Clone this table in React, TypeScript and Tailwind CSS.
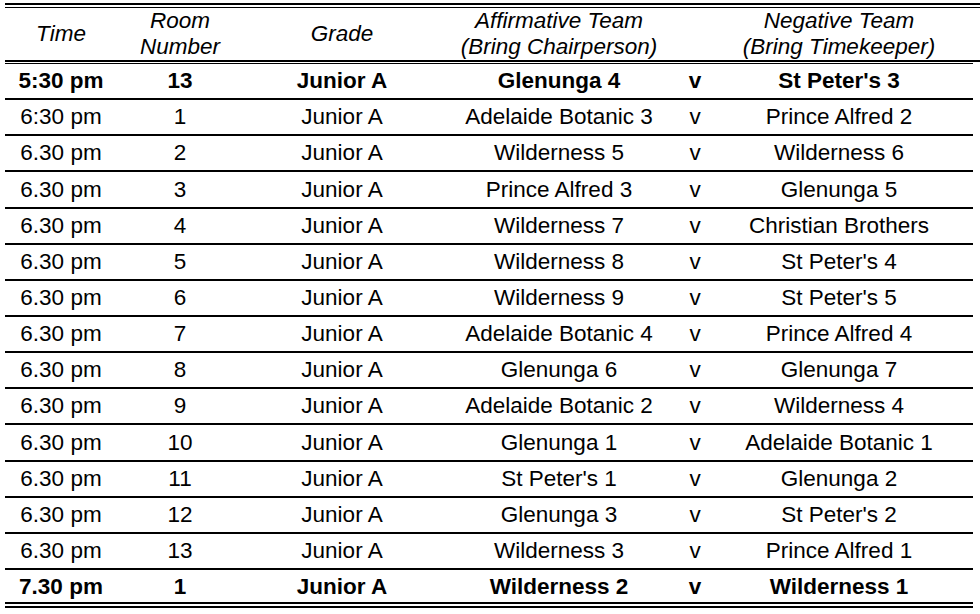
type Match = {
  time: string;
  room: string;
  grade: string;
  affirmative: string;
  negative: string;
  bold?: boolean;
};

const matches: Match[] = [
  { time: "5:30 pm", room: "13", grade: "Junior A", affirmative: "Glenunga 4", negative: "St Peter's 3", bold: true },
  { time: "6:30 pm", room: "1", grade: "Junior A", affirmative: "Adelaide Botanic 3", negative: "Prince Alfred 2" },
  { time: "6.30 pm", room: "2", grade: "Junior A", affirmative: "Wilderness 5", negative: "Wilderness 6" },
  { time: "6.30 pm", room: "3", grade: "Junior A", affirmative: "Prince Alfred 3", negative: "Glenunga 5" },
  { time: "6.30 pm", room: "4", grade: "Junior A", affirmative: "Wilderness 7", negative: "Christian Brothers" },
  { time: "6.30 pm", room: "5", grade: "Junior A", affirmative: "Wilderness 8", negative: "St Peter's 4" },
  { time: "6.30 pm", room: "6", grade: "Junior A", affirmative: "Wilderness 9", negative: "St Peter's 5" },
  { time: "6.30 pm", room: "7", grade: "Junior A", affirmative: "Adelaide Botanic 4", negative: "Prince Alfred 4" },
  { time: "6.30 pm", room: "8", grade: "Junior A", affirmative: "Glenunga 6", negative: "Glenunga 7" },
  { time: "6.30 pm", room: "9", grade: "Junior A", affirmative: "Adelaide Botanic 2", negative: "Wilderness 4" },
  { time: "6.30 pm", room: "10", grade: "Junior A", affirmative: "Glenunga 1", negative: "Adelaide Botanic 1" },
  { time: "6.30 pm", room: "11", grade: "Junior A", affirmative: "St Peter's 1", negative: "Glenunga 2" },
  { time: "6.30 pm", room: "12", grade: "Junior A", affirmative: "Glenunga 3", negative: "St Peter's 2" },
  { time: "6.30 pm", room: "13", grade: "Junior A", affirmative: "Wilderness 3", negative: "Prince Alfred 1" },
  { time: "7.30 pm", room: "1", grade: "Junior A", affirmative: "Wilderness 2", negative: "Wilderness 1", bold: true },
];

const cols = "grid grid-cols-[112px_126px_198px_236px_36px_252px] items-center text-center";

function HeaderRow() {
  return (
    <div className={`${cols} h-[52px] italic leading-[26px] mr-[7px]`}>
      <div>Time</div>
      <div>
        Room
        <br />
        Number
      </div>
      <div>Grade</div>
      <div>
        Affirmative Team
        <br />
        (Bring Chairperson)
      </div>
      <div></div>
      <div>
        Negative Team
        <br />
        (Bring Timekeeper)
      </div>
    </div>
  );
}

function MatchRow({ match, last }: { match: Match; last: boolean }) {
  return (
    <div
      className={`${cols} mr-[7px] ${last ? "h-[32px]" : "h-[36.15px] border-b-2 border-black"} ${
        match.bold ? "font-bold" : ""
      }`}
    >
      <div>{match.time}</div>
      <div>{match.room}</div>
      <div>{match.grade}</div>
      <div>{match.affirmative}</div>
      <div>v</div>
      <div>{match.negative}</div>
    </div>
  );
}

export default function App() {
  return (
    <div className="w-[980px] h-[614px] bg-white text-black text-[22.5px] font-['Liberation_Sans',Arial,sans-serif] pl-[5px] pt-[3px]">
      <div className="h-[2px] bg-black" />
      <div className="h-px bg-black mt-[2px]" />
      <HeaderRow />
      <div className="h-[2px] bg-black" />
      <div className="h-px bg-black mt-px mr-[7px]" />
      {matches.map((m, i) => (
        <MatchRow key={i} match={m} last={i === matches.length - 1} />
      ))}
      <div className="h-[2px] bg-black mr-[7px]" />
      <div className="h-[2px] bg-black mt-[2px] mr-[7px]" />
    </div>
  );
}
